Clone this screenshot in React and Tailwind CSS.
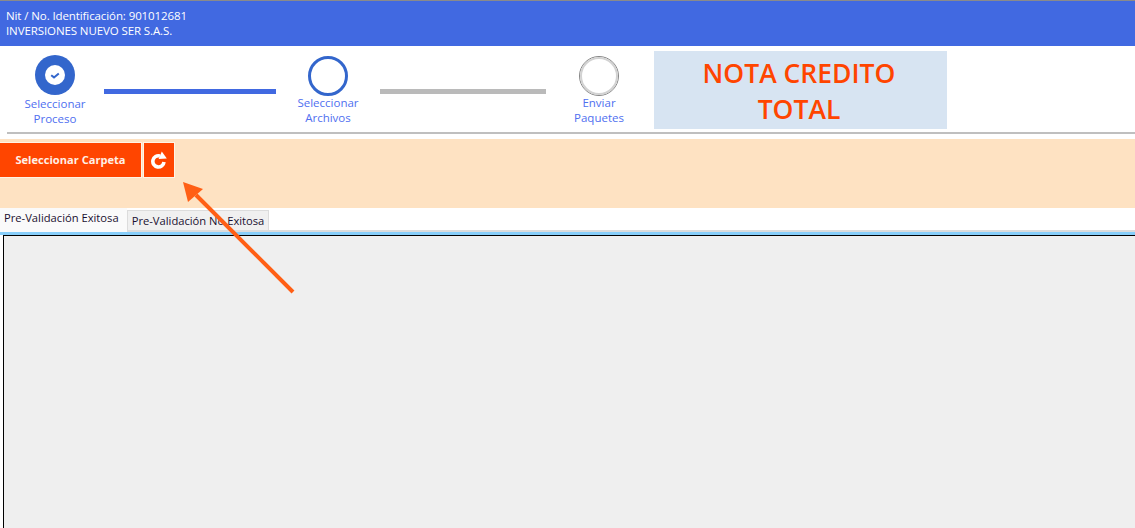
function Step({ widthClass, topClass, labelClass, circle, lines }) {
  return (
    <div className={`${widthClass} ${topClass} flex flex-col items-center shrink-0`}>
      {circle}
      <div className={`${labelClass} text-center text-[11.5px] leading-[15px] text-[#4f6ff0]`}>
        {lines.map((l) => (
          <div key={l}>{l}</div>
        ))}
      </div>
    </div>
  );
}

export default function App() {
  return (
    <div className="relative w-[1135px] h-[528px] overflow-hidden bg-white font-['Open_Sans','Noto_Sans',sans-serif]">
      {/* header */}
      <div className="h-px bg-[#8a8a8a]" />
      <div className="h-[45px] bg-[#4169e1] pl-[6px] pt-[7px] text-[11.5px] leading-[15px] tracking-[-0.1px] text-white">
        <div>Nit / No. Identificación: 901012681</div>
        <div>INVERSIONES NUEVO SER S.A.S.</div>
      </div>

      {/* stepper */}
      <div className="flex h-[86px] items-start pl-[6px]">
        <Step
          widthClass="w-[98px]"
          topClass="pt-[9px]"
          labelClass="mt-[1px]"
          lines={["Seleccionar", "Proceso"]}
          circle={
            <div className="flex h-[40px] w-[40px] items-center justify-center rounded-full bg-[#3366cc]">
              <div className="flex h-[20px] w-[20px] items-center justify-center rounded-full bg-white">
                <svg width="12" height="12" viewBox="0 0 12 12" fill="none">
                  <path d="M2.2 6.2 L5 8.4 L9.8 4.4" stroke="#3366cc" strokeWidth="2" />
                </svg>
              </div>
            </div>
          }
        />
        <div className="mt-[43px] h-[5px] w-[172px] shrink-0 bg-[#4169e1]" />
        <Step
          widthClass="w-[104px]"
          topClass="pt-[10px]"
          labelClass="-mt-[1px]"
          lines={["Seleccionar", "Archivos"]}
          circle={<div className="h-[40px] w-[40px] rounded-full border-[3px] border-[#3366cc] bg-white" />}
        />
        <div className="mt-[43px] h-[5px] w-[166px] shrink-0 bg-[#bababa]" />
        <Step
          widthClass="w-[106px]"
          topClass="pt-[10px]"
          labelClass="-mt-[1px]"
          lines={["Enviar", "Paquetes"]}
          circle={
            <div className="h-[40px] w-[40px] rounded-full border border-[#858585] bg-white">
              <div className="h-full w-full rounded-full border-2 border-[#d2d2d2]" />
            </div>
          }
        />
        <div className="ml-[2px] mt-[5px] flex h-[78px] w-[293px] shrink-0 flex-col items-center justify-center bg-[#d7e4f2] pr-[3px] pt-[2px] text-[26.5px] font-semibold leading-[36px] text-[#ff4500]">
          <div>NOTA CREDITO</div>
          <div>TOTAL</div>
        </div>
      </div>

      <div className="ml-[7px] h-[2px] bg-[#bfbfbf]" />
      <div className="h-[5px]" />

      {/* toolbar */}
      <div className="flex h-[69px] items-start gap-[1px] bg-[#fee2c2] pt-[3px]">
        <button className="flex h-[36px] w-[142px] items-center justify-center border border-[#fff3e6] border-l-0 bg-[#ff4500] text-[11.1px] font-bold text-[#fff0e6]">
          Seleccionar Carpeta
        </button>
        <button className="flex h-[36px] w-[32px] items-center justify-center border border-[#fff3e6] bg-[#ff4500]">
          <svg width="18" height="18" viewBox="0 0 18 18" fill="none">
            <path d="M14 11 A5.6 5.6 0 1 1 10 5" stroke="white" strokeWidth="3.6" />
            <path d="M11.8 0.5 L16.8 7.4 L8.6 8 Z" fill="white" />
          </svg>
        </button>
      </div>

      {/* tabs */}
      <div className="flex h-[24px] items-start border-b-2 border-[#dcdcdc] bg-white text-[11.2px] text-[#1a1030]">
        <div className="flex h-[24px] w-[127px] shrink-0 items-center whitespace-nowrap bg-[#fafafa] pb-[3px] pl-[4px]">Pre-Validación Exitosa</div>
        <div className="mt-[2px] flex h-[20px] w-[142px] shrink-0 items-center justify-center whitespace-nowrap border border-b-0 border-[#dcdcdc] bg-[#f0f0f0] pt-px">
          Pre-Validación No Exitosa
        </div>
      </div>
      <div className="h-[3px] bg-[#87cefa]" />

      {/* panel */}
      <div className="ml-[3px] h-[293px] border-l border-t border-black bg-[#efefef]" />

      {/* annotation arrow */}
      <svg className="pointer-events-none absolute left-0 top-0" width="1135" height="528" viewBox="0 0 1135 528" fill="none">
        <path d="M293 292 L196 195" stroke="#ff5f15" strokeWidth="4" />
        <path d="M183 182 L203 189 L188 202 Z" fill="#ff5f15" />
      </svg>
    </div>
  );
}
